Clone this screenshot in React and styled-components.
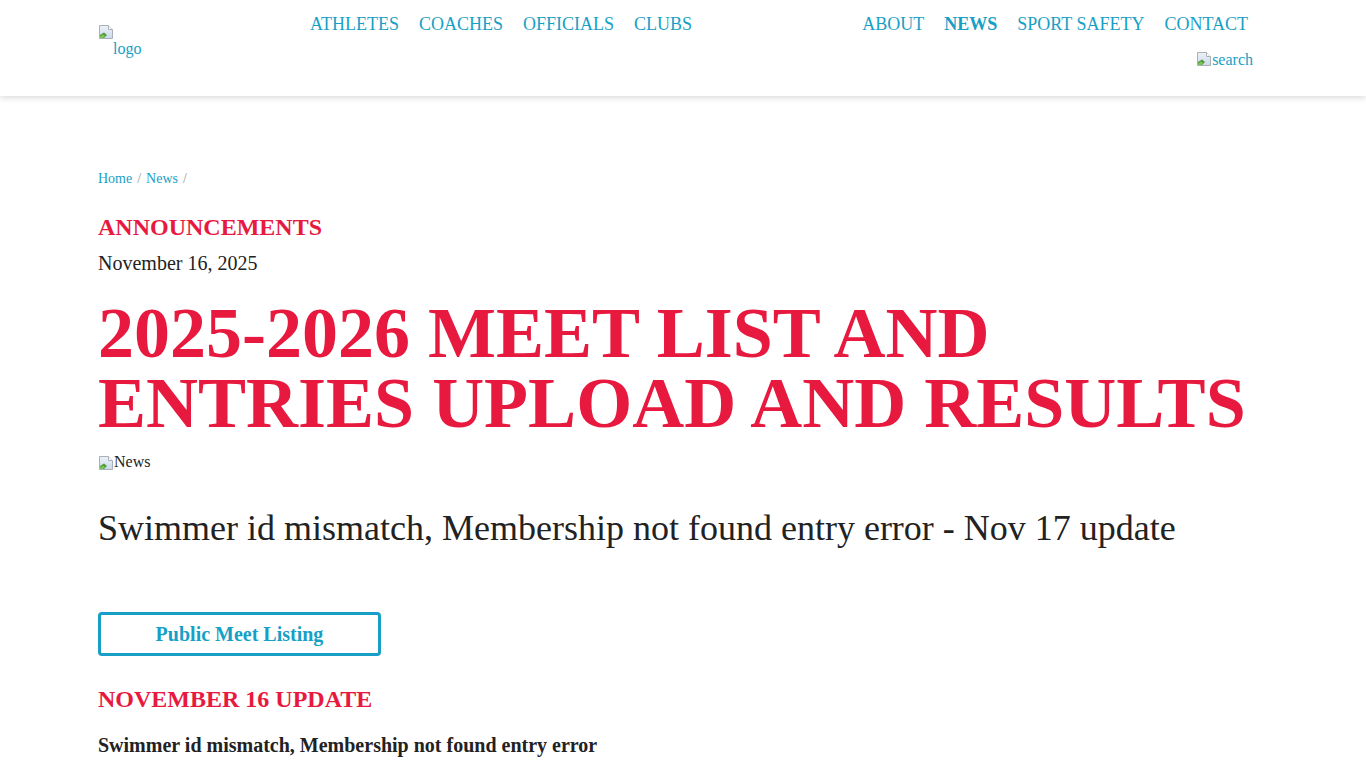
import React from "react";
import styled, { createGlobalStyle } from "styled-components";

const TEAL = "#189fc6";
const RED = "#e8193f";
const INK = "#222222";

const Global = createGlobalStyle`
  html, body { margin: 0; padding: 0; background: #fff; }
  body { font-family: "Liberation Serif", "Times New Roman", serif; color: ${INK}; }
  * { box-sizing: border-box; }
  a { text-decoration: none; }
`;

const Header = styled.header`
  height: 96px;
  background: #fff;
  box-shadow: 0 2px 6px rgba(0, 0, 0, 0.14);
  position: relative;
  z-index: 1;
`;

const HeaderInner = styled.div`
  width: 1170px;
  margin: 0 auto;
  display: flex;
  align-items: flex-start;
`;

const LogoLink = styled.a`
  width: 212px;
  flex: none;
  display: block;
  padding-top: 24px;
  color: ${TEAL};
  font-size: 16px;
  line-height: 16px;
`;

const LogoAlt = styled.span`
  display: block;
  padding-left: 15px;
  line-height: 18px;
`;

const NavList = styled.ul`
  list-style: none;
  margin: 12px 0 0 0;
  padding: 0;
  display: flex;
  gap: 20px;
`;

const NavItem = styled.li`
  font-size: 18px;
  line-height: 24px;
  a {
    color: ${TEAL};
    font-weight: ${(p) => (p.$active ? 700 : 400)};
  }
`;

const RightCol = styled.div`
  margin-left: auto;
  display: flex;
  flex-direction: column;
  align-items: flex-end;
  padding-right: 20px;
`;

const SearchLink = styled.a`
  display: flex;
  align-items: flex-end;
  margin-top: 15px;
  margin-right: -5px;
  color: ${TEAL};
  font-size: 16px;
  line-height: 16px;
  span { line-height: 16px; position: relative; top: 1px; }
`;

const Main = styled.main`
  width: 1170px;
  margin: 0 auto;
  padding-top: 73px;
  padding-bottom: 40px;
`;

const Breadcrumb = styled.nav`
  display: flex;
  font-size: 14px;
  line-height: 20px;
  a { color: ${TEAL}; }
`;

const Sep = styled.span`
  color: #9a9a9a;
  padding: 0 5px;
`;

const Category = styled.h3`
  margin: 24px 0 0 0;
  color: ${RED};
  font-size: 24px;
  line-height: 28px;
  font-weight: 700;
  text-transform: uppercase;
`;

const DateLine = styled.div`
  margin-top: 10px;
  font-size: 20px;
  line-height: 24px;
  color: ${INK};
`;

const Title = styled.h1`
  margin: 23px 0 0 0;
  color: ${RED};
  font-size: 72px;
  line-height: 70px;
  font-weight: 700;
  text-transform: uppercase;
`;

const ImgAlt = styled.div`
  margin-top: 13px;
  display: flex;
  align-items: flex-end;
  font-size: 16px;
  line-height: 16px;
  height: 20px;
  color: ${INK};
  span { position: relative; top: -1px; }
`;

const Lead = styled.p`
  margin: 35px 0 0 0;
  font-size: 36px;
  line-height: 44px;
  color: ${INK};
`;

const OutlineButton = styled.a`
  margin-top: 62px;
  display: flex;
  align-items: center;
  justify-content: center;
  width: 283px;
  height: 44px;
  border: 3px solid ${TEAL};
  border-radius: 4px;
  color: ${TEAL};
  font-size: 20px;
  font-weight: 700;
`;

const SectionHead = styled.h2`
  margin: 28px 0 0 0;
  color: ${RED};
  font-size: 24px;
  line-height: 30px;
  font-weight: 700;
`;

const BoldLine = styled.p`
  margin: 19px 0 0 0;
  font-size: 20px;
  line-height: 24px;
  font-weight: 700;
  color: ${INK};
`;

function BrokenImg() {
  return (
    <svg width="16" height="16" viewBox="0 0 16 16" style={{ flex: "none", display: "block" }}>
      <defs>
        <linearGradient id="sky" x1="0" y1="0" x2="0" y2="1">
          <stop offset="0" stopColor="#eef2f7" />
          <stop offset="1" stopColor="#c9d8ea" />
        </linearGradient>
      </defs>
      <path d="M1.5 1.5 H10.5 L14.5 5.5 V14.5 H1.5 Z" fill="url(#sky)" stroke="#a9b0b8" />
      <path d="M10.5 1.5 V5.5 H14.5" fill="#fff" stroke="#a9b0b8" />
      <path d="M2 14 L2 11 L6 8.5 L9 11 L6 14 Z" fill="#4f9a3a" />
      <path d="M2 14 L2 12.5 L5 10.5 L7 12 L5 14 Z" fill="#7cc35a" />
    </svg>
  );
}

export default function App() {
  return (
    <>
      <Global />
      <Header>
        <HeaderInner>
          <LogoLink href="#">
            <BrokenImg />
            <LogoAlt>logo</LogoAlt>
          </LogoLink>
          <NavList>
            <NavItem><a href="#">ATHLETES</a></NavItem>
            <NavItem><a href="#">COACHES</a></NavItem>
            <NavItem><a href="#">OFFICIALS</a></NavItem>
            <NavItem><a href="#">CLUBS</a></NavItem>
          </NavList>
          <RightCol>
            <NavList>
              <NavItem><a href="#">ABOUT</a></NavItem>
              <NavItem $active><a href="#">NEWS</a></NavItem>
              <NavItem><a href="#">SPORT SAFETY</a></NavItem>
              <NavItem><a href="#">CONTACT</a></NavItem>
            </NavList>
            <SearchLink href="#">
              <BrokenImg />
              <span>search</span>
            </SearchLink>
          </RightCol>
        </HeaderInner>
      </Header>
      <Main>
        <Breadcrumb>
          <a href="#">Home</a>
          <Sep>/</Sep>
          <a href="#">News</a>
          <Sep>/</Sep>
        </Breadcrumb>
        <Category>Announcements</Category>
        <DateLine>November 16, 2025</DateLine>
        <Title>
          2025-2026 Meet List and
          <br />
          Entries Upload and Results
        </Title>
        <ImgAlt>
          <BrokenImg />
          <span>News</span>
        </ImgAlt>
        <Lead>Swimmer id mismatch, Membership not found entry error - Nov 17 update</Lead>
        <OutlineButton href="#">Public Meet Listing</OutlineButton>
        <SectionHead>NOVEMBER 16 UPDATE</SectionHead>
        <BoldLine>Swimmer id mismatch, Membership not found entry error</BoldLine>
      </Main>
    </>
  );
}
